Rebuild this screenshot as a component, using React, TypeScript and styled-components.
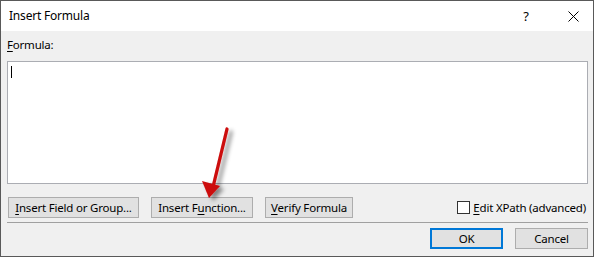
import React, { useState } from 'react';
import styled, { createGlobalStyle } from 'styled-components';

const GlobalStyle = createGlobalStyle`
  html, body { margin: 0; padding: 0; background: #ffffff; }
  body { font-family: "Noto Sans", "Open Sans", sans-serif; font-size: 11.5px; letter-spacing: -0.2px; color: #000; }
`;

const Window = styled.div`
  position: relative;
  width: 594px;
  height: 257px;
  box-sizing: border-box;
  border: 1px solid #595959;
  background: #f0f0f0;
  display: flex;
  flex-direction: column;
`;

const TitleBar = styled.div`
  height: 30px;
  background: #ffffff;
  display: flex;
  align-items: center;
  padding-left: 8px;
  font-size: 12px;
`;

const TitleText = styled.div`
  flex: 1;
  margin-top: -1px;
`;

const TitleButton = styled.div<{ $w: number }>`
  width: ${p => p.$w}px;
  height: 30px;
  display: flex;
  align-items: center;
  justify-content: center;
  font-size: 13px;
  color: #000;
`;

const Body = styled.div`
  flex: 1;
  display: flex;
  flex-direction: column;
  padding: 6px 5px 0 6px;
`;

const Label = styled.div`
  line-height: 16px;
`;

const Key = styled.span`
  text-decoration: underline;
  text-underline-offset: 2px;
`;

const FormulaBox = styled.div`
  margin-top: 8px;
  height: 123px;
  box-sizing: border-box;
  border: 1px solid #abadb3;
  background: #ffffff;
  padding: 4px 3px;
`;

const Caret = styled.div`
  width: 1px;
  height: 12px;
  background: #000;
`;

const ButtonRow = styled.div`
  margin-top: 13px;
  display: flex;
  align-items: center;
  padding-left: 1px;
`;

const Button = styled.button<{ $w: number; $default?: boolean }>`
  width: ${p => p.$w}px;
  height: 21px;
  margin-right: 12px;
  padding: 0;
  box-sizing: border-box;
  background: #e1e1e1;
  border: ${p => (p.$default ? '2px solid #0078d7' : '1px solid #adadad')};
  font-family: inherit;
  font-size: 11.5px;
  letter-spacing: -0.2px;
  color: #000;
  line-height: 17px;
  &:last-child { margin-right: 0; }
`;

const Spacer = styled.div`
  flex: 1;
`;

const CheckLabel = styled.label`
  display: flex;
  align-items: center;
  gap: 3px;
  margin-right: 2px;
`;

const CheckBox = styled.span`
  width: 13px;
  height: 13px;
  box-sizing: border-box;
  border: 1px solid #333333;
  background: #ffffff;
`;

const Separator = styled.div`
  margin-top: 4px;
  height: 1px;
  background: #a0a0a0;
`;

const Footer = styled.div`
  margin-top: 5px;
  display: flex;
  justify-content: flex-end;
`;

const ArrowLayer = styled.svg`
  position: absolute;
  left: 190px;
  top: 118px;
  overflow: visible;
`;

export default function App() {
  const [advanced, setAdvanced] = useState(false);
  return (
    <>
      <GlobalStyle />
      <Window>
        <TitleBar>
          <TitleText>Insert Formula</TitleText>
          <TitleButton $w={54}>?</TitleButton>
          <TitleButton $w={40}>
            <svg width="11" height="11" viewBox="0 0 11 11">
              <path d="M0.5 0.5 L10.5 10.5 M10.5 0.5 L0.5 10.5" stroke="#000" strokeWidth="1" />
            </svg>
          </TitleButton>
        </TitleBar>
        <Body>
          <Label>
            <Key>F</Key>ormula:
          </Label>
          <FormulaBox>
            <Caret />
          </FormulaBox>
          <ButtonRow>
            <Button $w={131}><Key>I</Key>nsert Field or Group...</Button>
            <Button $w={102}>Insert F<Key>u</Key>nction...</Button>
            <Button $w={88}><Key>V</Key>erify Formula</Button>
            <Spacer />
            <CheckLabel onClick={() => setAdvanced(!advanced)}>
              <CheckBox />
              <span><Key>E</Key>dit XPath (advanced)</span>
            </CheckLabel>
          </ButtonRow>
          <Separator />
          <Footer>
            <Button $w={73} $default>OK</Button>
            <Button $w={73}>Cancel</Button>
          </Footer>
        </Body>
        <ArrowLayer width="50" height="85" viewBox="0 0 50 85">
          <defs>
            <filter id="sh" x="-50%" y="-50%" width="200%" height="200%">
              <feDropShadow dx="4" dy="3" stdDeviation="2" floodColor="#000" floodOpacity="0.45" />
            </filter>
          </defs>
          <g filter="url(#sh)">
            <path d="M36 10 L22 68" stroke="#cc0a0a" strokeWidth="3.2" strokeLinecap="round" />
            <path d="M18 79 L11 62 L29 67 Z" fill="#cc0a0a" />
          </g>
        </ArrowLayer>
      </Window>
    </>
  );
}
